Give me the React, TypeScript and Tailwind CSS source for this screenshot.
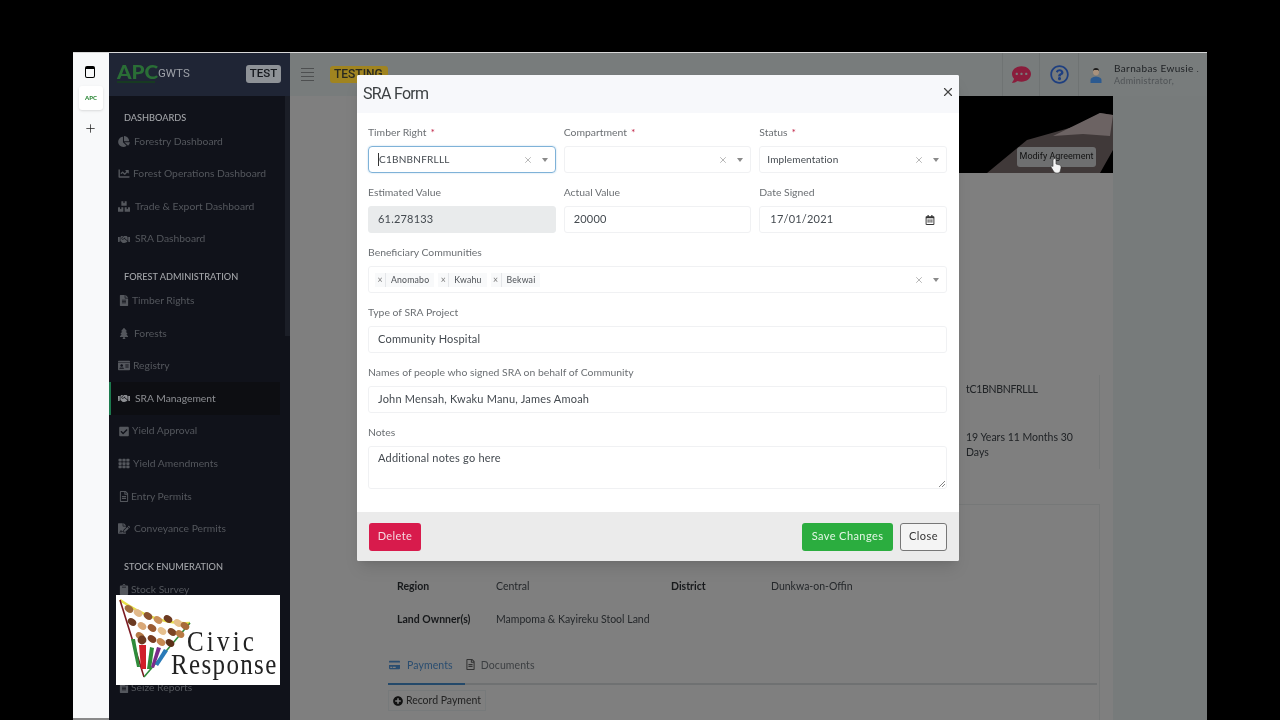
import React from "react";
import { FaChartPie, FaChartLine, FaHandshake, FaFileAlt, FaTree, FaCheckSquare, FaTh, FaClipboard, FaFileSignature, FaBoxes, FaIdCard, FaRegFileAlt, FaCommentDots, FaRegQuestionCircle, FaPlusCircle, FaCreditCard, FaRegCalendarAlt } from "react-icons/fa";
import { X, Plus } from "lucide-react";

const F = { fontFamily: "Lato, 'Open Sans', sans-serif" };

function Item({ icon: Icon, label, gap, active }: { icon: any; label: string; gap: string; active?: boolean }) {
  return (
    <div className={`flex h-[32.6px] items-center text-[10.3px] whitespace-nowrap ${active ? "bg-[#0d0e12] border-l-2 border-[#1c7a4e] pl-[7px] text-[#8d8f93] mr-[5px]" : "pl-[9px] text-[#54575d]"}`}>
      <Icon className="w-[12px] h-[11px] shrink-0" />
      <span className={gap}>{label}</span>
    </div>
  );
}

function Head({ children, top }: { children: React.ReactNode; top: string }) {
  return <div className={`pl-[15px] text-[#a3a5a9] text-[9.2px] font-medium h-[14px] leading-[14px] ${top}`}>{children}</div>;
}

function Label({ children, req }: { children: React.ReactNode; req?: boolean }) {
  return (
    <div className="h-[18px] mb-[5px] leading-[18px] text-[10.4px] text-[#6b6f73]">
      {children}
      {req && <span className="text-[#c2284a] ml-[4px]">*</span>}
    </div>
  );
}

function Caret() {
  return <span className="w-0 h-0 border-x-[3.5px] border-x-transparent border-t-[4px] border-t-[#8a8a8a]" />;
}

function Controls() {
  return (
    <span className="ml-auto flex items-center gap-[9px] pr-[7px]">
      <X className="w-[10px] h-[10px] text-[#8d8d8d]" strokeWidth={1.5} />
      <Caret />
    </span>
  );
}

function Box({ children, cls = "pl-[9px] border-[#f0f1f3] rounded-[3px]" }: { children?: React.ReactNode; cls?: string }) {
  return (
    <div className={`h-[27px] border flex items-center text-[11px] tracking-[0.2px] text-[#444a50] ${cls}`}>
      {children}
    </div>
  );
}

function Tag({ children }: { children: React.ReactNode }) {
  return (
    <span className="flex items-center h-[14px] bg-[#f8f9fa] text-[8.7px] tracking-[0.2px] text-[#4c5055] mr-[4px]">
      <span className="w-[11px] text-center border-r border-[#e4e6e9] text-[#777] h-full leading-[14px]">×</span>
      <span className="px-[5px]">{children}</span>
    </span>
  );
}

function Logo() {
  const dots = [
    [13, 14, "#a06a3c"], [22, 18, "#e2b98a"], [32, 21, "#8a5230"], [42, 25, "#c98f5a"], [52, 24, "#6b3a22"], [62, 28, "#e6c08e"], [69, 31, "#a86a3a"],
    [16, 27, "#6b3a22"], [26, 31, "#d9a878"], [36, 33, "#9a5a32"], [46, 36, "#e6c08e"], [56, 37, "#7c4526"], [64, 39, "#b87a44"],
    [24, 41, "#b47a48"], [36, 44, "#7a3e22"], [45, 47, "#c68a52"], [54, 48, "#5c3018"],
  ] as [number, number, string][];
  return (
    <div className="absolute left-[43px] top-[542px] w-[164px] h-[90px] bg-white overflow-hidden">
      <svg viewBox="0 0 164 90" className="absolute inset-0 w-full h-full">
        <path d="M4 5 Q40 30 74 28" stroke="#e8e04a" strokeWidth="2.5" fill="none" />
        <path d="M4 5 L28 82" stroke="#7c1a22" strokeWidth="1.6" fill="none" />
        <path d="M28 82 L74 28" stroke="#2e8b3a" strokeWidth="1.6" fill="none" />
        {dots.map(([x, y, c], i) => (
          <ellipse key={i} cx={x} cy={y} rx="4.6" ry="3.4" fill={c} transform={`rotate(35 ${x} ${y})`} />
        ))}
        <path d="M15 44 l4 0 5 28 -3 0z" fill="#2e8b3a" />
        <path d="M23 50 h7 v24 h-5z" fill="#d01f2a" />
        <circle cx="26" cy="45" r="4.4" fill="#6b3a22" />
        <path d="M34 52 l4 1 -3 21 -4 0z" fill="#2e8b3a" />
        <path d="M41 52 l4 1 -7 20 -3 -1z" fill="#7a2a8a" />
        <path d="M48 54 l4 2 -10 15 -3 -2z" fill="#2a7ab8" />
      </svg>
      <span className="absolute left-[71px] top-[37px] text-[25px] leading-[20px] tracking-[3.2px] text-[#222] origin-left scale-y-[1.15]" style={{ fontFamily: "'Liberation Serif', serif" }}>Civic</span>
      <span className="absolute left-[55px] top-[60px] text-[25px] leading-[20px] tracking-[1.35px] text-[#222] origin-left scale-y-[1.15]" style={{ fontFamily: "'Liberation Serif', serif" }}>Response</span>
    </div>
  );
}

export default function App() {
  return (
    <div className="relative w-[1280px] h-[720px] bg-black overflow-hidden blur-[0.45px]" style={F}>
      <div className="h-px w-[1134px] ml-[73px] mt-[52px] bg-[#d8d8d8]" />
      <div className="relative flex w-[1134px] h-[667px] ml-[73px]">
        {/* strip */}
        <div className="w-[36px] h-full bg-[#f8f9fa] border-b-2 border-[#8a8a8a] flex flex-col items-center pt-[13px]">
          <div className="mr-[2px] w-[10px] h-[12px] border border-black border-t-[3px] rounded-[2px]" />
          <div className="mt-[8px] w-[24px] h-[24px] bg-white rounded-[3px] shadow flex items-center justify-center text-[#2f8a3a]">
            <span className="text-[6px] font-black leading-none">APC</span>
          </div>
          <Plus className="mr-[2px] mt-[12px] w-[13px] h-[13px] text-[#222]" strokeWidth={1.4} />
        </div>

        {/* sidebar */}
        <div className="w-[181px] h-full bg-[#10121a] flex flex-col overflow-hidden">
          <div className="h-[43px] shrink-0 bg-[#1f2535] flex items-center pl-[8px] pr-[9px]">
            <div className="w-[41px] -mt-[1px]">
              <div className="text-[#2a6e36] text-[18px] font-black leading-[15px] origin-left scale-x-[1.15]">APC</div>
              <div className="h-[2px] w-[38px] mt-[1px] bg-[#173a22]" />
            </div>
            <span className="-mt-[2px] text-[#9da1a8] text-[11.5px]" style={{ fontFamily: "Roboto, sans-serif" }}>GWTS</span>
            <span className="-mt-[2px] ml-auto w-[35px] h-[18px] rounded-[3px] bg-[#8e9297] text-[#15181d] text-[11.5px] font-medium flex items-center justify-center" style={{ fontFamily: "Roboto, sans-serif" }}>TEST</span>
          </div>
          <div className="flex flex-1 min-h-0">
            <div className="flex-1 min-w-0">
              <Head top="mt-[15px]">DASHBOARDS</Head>
              <Item icon={FaChartPie} label="Forestry Dashboard" gap="ml-[4px]" />
              <Item icon={FaChartLine} label="Forest Operations Dashboard" gap="ml-[3px]" />
              <Item icon={FaBoxes} label="Trade & Export Dashboard" gap="ml-[5px]" />
              <Item icon={FaHandshake} label="SRA Dashboard" gap="ml-[5px]" />
              <Head top="mt-[15px]">FOREST ADMINISTRATION</Head>
              <Item icon={FaFileAlt} label="Timber Rights" gap="ml-[2px]" />
              <Item icon={FaTree} label="Forests" gap="ml-[4px]" />
              <Item icon={FaIdCard} label="Registry" gap="ml-[3px]" />
              <Item icon={FaHandshake} label="SRA Management" gap="ml-[5px]" active />
              <Item icon={FaCheckSquare} label="Yield Approval" gap="ml-[2px]" />
              <Item icon={FaTh} label="Yield Amendments" gap="ml-[3px]" />
              <Item icon={FaRegFileAlt} label="Entry Permits" gap="ml-[1px]" />
              <Item icon={FaFileSignature} label="Conveyance Permits" gap="ml-[4px]" />
              <Head top="mt-[14.5px]">STOCK ENUMERATION</Head>
              <Item icon={FaClipboard} label="Stock Survey" gap="ml-[1px]" />
              <div className="h-[65px]" />
              <Item icon={FaFileAlt} label="Seize Reports" gap="ml-[1px]" />
            </div>
            <div className="w-[5px] shrink-0">
              <div className="h-[240px] bg-[#1b1e27]" />
            </div>
          </div>
        </div>

        {/* main */}
        <div className="flex-1 min-w-0 h-full bg-[#777b7b] flex flex-col">
          <div className="h-[43px] shrink-0 bg-[#787c7c] flex items-center pl-[11px]">
            <div className="flex flex-col gap-[3px] w-[13px]">
              <span className="h-px bg-[#4d4f50]" /><span className="h-px bg-[#4d4f50]" /><span className="h-px bg-[#4d4f50]" /><span className="h-px bg-[#4d4f50]" />
            </div>
            <span className="ml-[16px] w-[58px] h-[17px] rounded-[3px] bg-[#a08420] text-[#2a2a20] text-[12px] font-medium pl-[4px] leading-[17px]" style={{ fontFamily: "Roboto, sans-serif" }}>TESTING</span>
            <div className="ml-auto flex items-center h-full">
              <div className="w-[37px] h-full border-l border-[#6f7373] flex items-center justify-center">
                <FaCommentDots className="w-[21px] h-[19px] text-[#8a1d3c]" />
              </div>
              <div className="w-[39px] h-full border-l border-[#6f7373] flex items-center justify-center">
                <FaRegQuestionCircle className="w-[19px] h-[19px] text-[#1e3f80]" />
              </div>
              <div className="w-[129px] h-full border-l border-[#6f7373] flex items-center pl-[11px]">
                <svg viewBox="0 0 12 16" className="w-[12px] h-[16px]">
                  <path d="M3 5 a3 3.4 0 0 1 6 0 a3 3.4 0 0 1 -6 0z" fill="#a8917c" />
                  <path d="M3 4 a3 3 0 0 1 6 0 l-1 -1 h-4z" fill="#1c1c1c" />
                  <path d="M0.5 16 v-3 q0 -3 5.5 -3.5 q5.5 .5 5.5 3.5 v3z" fill="#2c5a90" />
                </svg>
                <div className="ml-[12px] leading-[11px]">
                  <div className="text-[10px] text-[#202326] tracking-[0.38px]">Barnabas Ewusie <span className="text-[8px]">.</span></div>
                  <div className="text-[9px] text-[#4f5356] tracking-[0.3px]">Administrator,</div>
                </div>
              </div>
            </div>
          </div>
          <div className="flex-1 min-h-0 mr-[94px] bg-[#7f7f7f] flex flex-col">
            <div className="relative h-[77px] shrink-0 ml-auto w-[500px] bg-black overflow-hidden">
              <svg viewBox="0 0 500 77" className="absolute inset-0 w-full h-full">
                <path d="M374 77 L414 44 L460 31 L487 17 L500 19 L500 54 L487 77Z" fill="#403939" />
                <path d="M440 40 L487 17 L500 19 L497 40 L470 38Z" fill="#6c6363" />
              </svg>
              <div className="absolute right-[17px] top-[51px] w-[79px] h-[20px] rounded-[3px] bg-[#6e6f70] text-[#111] text-[9px] flex items-center justify-center" style={{ fontFamily: "Roboto, sans-serif" }}>Modify Agreement</div>
            </div>
            <div className="ml-[85px] mr-[13px] mt-[202px] h-[94px] border-r border-[#767878] flex justify-end text-[#202326] text-[10.5px]">
              <div className="w-[133px] pt-[7px] leading-[15px]">
                <div className="tracking-[-0.3px]">tC1BNBNFRLLL</div>
                <div className="mt-[33px] w-[112px]">19 Years 11 Months 30 Days</div>
              </div>
            </div>
            <div className="ml-[85px] mr-[13px] mt-[35px] flex-1 border-r border-t border-[#767878] flex flex-col text-[#25282b] text-[10.5px]">
              <div className="h-[65px] shrink-0" />
              <div className="grid grid-cols-[99px_175px_100px_1fr] pl-[22px] h-[33px] shrink-0 items-center">
                <span className="font-bold text-[#17191b]">Region</span><span>Central</span>
                <span className="font-bold text-[#17191b]">District</span><span>Dunkwa-on-Offin</span>
              </div>
              <div className="grid grid-cols-[99px_1fr] pl-[22px] h-[33px] shrink-0 items-center">
                <span className="font-bold text-[#17191b]">Land Ownner(s)</span><span>Mampoma &amp; Kayireku Stool Land</span>
              </div>
              <div className="mt-[19px] mr-[2px] ml-[13px] h-[30px] shrink-0 border-b-2 border-[#6f7172] flex items-start pt-[1px] leading-[18px] relative">
                <span className="absolute left-0 bottom-[-2px] w-[77px] h-[2px] bg-[#24496a]" />
                <FaCreditCard className="ml-[1px] mt-[4px] w-[11px] h-[10px] text-[#2a4d70]" />
                <span className="ml-[7px] tracking-[0.1px] text-[#2a4d70]">Payments</span>
                <FaRegFileAlt className="mt-[3px] ml-[13px] w-[9px] h-[11px] text-[#333]" />
                <span className="ml-[6px] tracking-[0.1px] text-[#3c3f42]">Documents</span>
              </div>
              <div className="ml-[13px] mt-[5px] w-[98px] h-[21px] shrink-0 border border-[#777a7b] flex items-center justify-center gap-[3px] text-[#222]">
                <FaPlusCircle className="w-[10px] h-[10px] text-[#111]" />
                <span>Record Payment</span>
              </div>
            </div>
          </div>
        </div>

        <Logo />

        {/* cursor */}
        <svg viewBox="0 0 12 16" className="absolute left-[977px] top-[105px] w-[12px] h-[16px]">
          <path d="M4 1 C5 0 6 1 6 2 V6 L10 7 C11 7.5 11 9 11 10 L10 14 C9 15.5 5 15.5 4 14 L1 9 C1 8 2 7.5 3 8.5 V2 C3 1.5 3.5 1 4 1Z" fill="#f4f4f4" stroke="#333" strokeWidth="0.6" />
        </svg>

        {/* modal */}
        <div className="absolute left-[284px] top-[22px] w-[602px] h-[486px] bg-white rounded-[2px] flex flex-col shadow-lg overflow-hidden">
          <div className="h-[38px] shrink-0 bg-[#f7f8fb] flex items-center pl-[6px] pr-[4px]">
            <span className="text-[16px] tracking-[-0.7px] text-[#3c4043]" style={{ fontFamily: "Roboto, sans-serif" }}>SRA Form</span>
            <X className="ml-auto mb-[5px] w-[14px] h-[14px] text-[#444]" strokeWidth={2} />
          </div>
          <div className="flex-1 pt-[10px] pl-[11px] pr-[12px]">
            <div className="grid grid-cols-3 gap-x-[8px]">
              <div className="h-[60px]">
                <Label req>Timber Right</Label>
                <Box cls="pl-[9px] border-[#7fb2d8] rounded-[4px] shadow-[0_0_2px_#b8d6ec]"><span className="w-px h-[13px] bg-[#333]" /><span className="text-[10px] tracking-[0.25px]">C1BNBNFRLLL</span><Controls /></Box>
              </div>
              <div className="h-[60px]">
                <Label req>Compartment</Label>
                <Box><Controls /></Box>
              </div>
              <div className="h-[60px]">
                <Label req>Status</Label>
                <Box cls="pl-[7px] border-[#f0f1f3] rounded-[3px]"><span className="text-[10px] tracking-[0.15px]">Implementation</span><Controls /></Box>
              </div>
              <div className="h-[60px]">
                <Label>Estimated Value</Label>
                <Box cls="pl-[9px] bg-[#e9ebec] border-[#e9ebec] rounded-[3px]">61.278133</Box>
              </div>
              <div className="h-[60px]">
                <Label>Actual Value</Label>
                <Box>20000</Box>
              </div>
              <div className="h-[60px]">
                <Label>Date Signed</Label>
                <Box cls="pl-[10px] border-[#f0f1f3] rounded-[3px]">17/01/2021<FaRegCalendarAlt className="ml-auto mr-[11px] w-[10px] h-[10px] text-[#333]" /></Box>
              </div>
            </div>
            <div className="h-[60px]">
              <Label>Beneficiary Communities</Label>
              <Box cls="pl-[6px] border-[#f0f1f3] rounded-[3px]"><Tag>Anomabo</Tag><Tag>Kwahu</Tag><Tag>Bekwai</Tag><Controls /></Box>
            </div>
            <div className="h-[60px]">
              <Label>Type of SRA Project</Label>
              <Box>Community Hospital</Box>
            </div>
            <div className="h-[60px]">
              <Label>Names of people who signed SRA on behalf of Community</Label>
              <Box>John Mensah, Kwaku Manu, James Amoah</Box>
            </div>
            <div>
              <Label>Notes</Label>
              <div className="relative h-[43px] rounded-[3px] border border-[#f0f1f3] pl-[9px] pt-[3px] text-[11px] tracking-[0.2px] text-[#444a50]">
                Additional notes go here
                <svg viewBox="0 0 6 6" className="absolute right-[1px] bottom-[1px] w-[6px] h-[6px]"><path d="M0 6 L6 0 M3 6 L6 3" stroke="#666" strokeWidth="0.8" /></svg>
              </div>
            </div>
          </div>
          <div className="h-[49px] shrink-0 bg-[#ebebeb] flex items-center px-[12px] text-[11px] tracking-[0.42px]">
            <span className="w-[52px] h-[28px] rounded-[3px] bg-[#d81b4c] text-[#f5d8e0] flex items-center justify-center">Delete</span>
            <span className="ml-auto w-[91px] h-[28px] rounded-[3px] bg-[#2bad3f] text-[#e4f7e6] flex items-center justify-center">Save Changes</span>
            <span className="ml-[7px] w-[47px] h-[28px] rounded-[3px] bg-[#f4f4f4] border border-[#777] text-[#333] flex items-center justify-center">Close</span>
          </div>
        </div>
      </div>
    </div>
  );
}
